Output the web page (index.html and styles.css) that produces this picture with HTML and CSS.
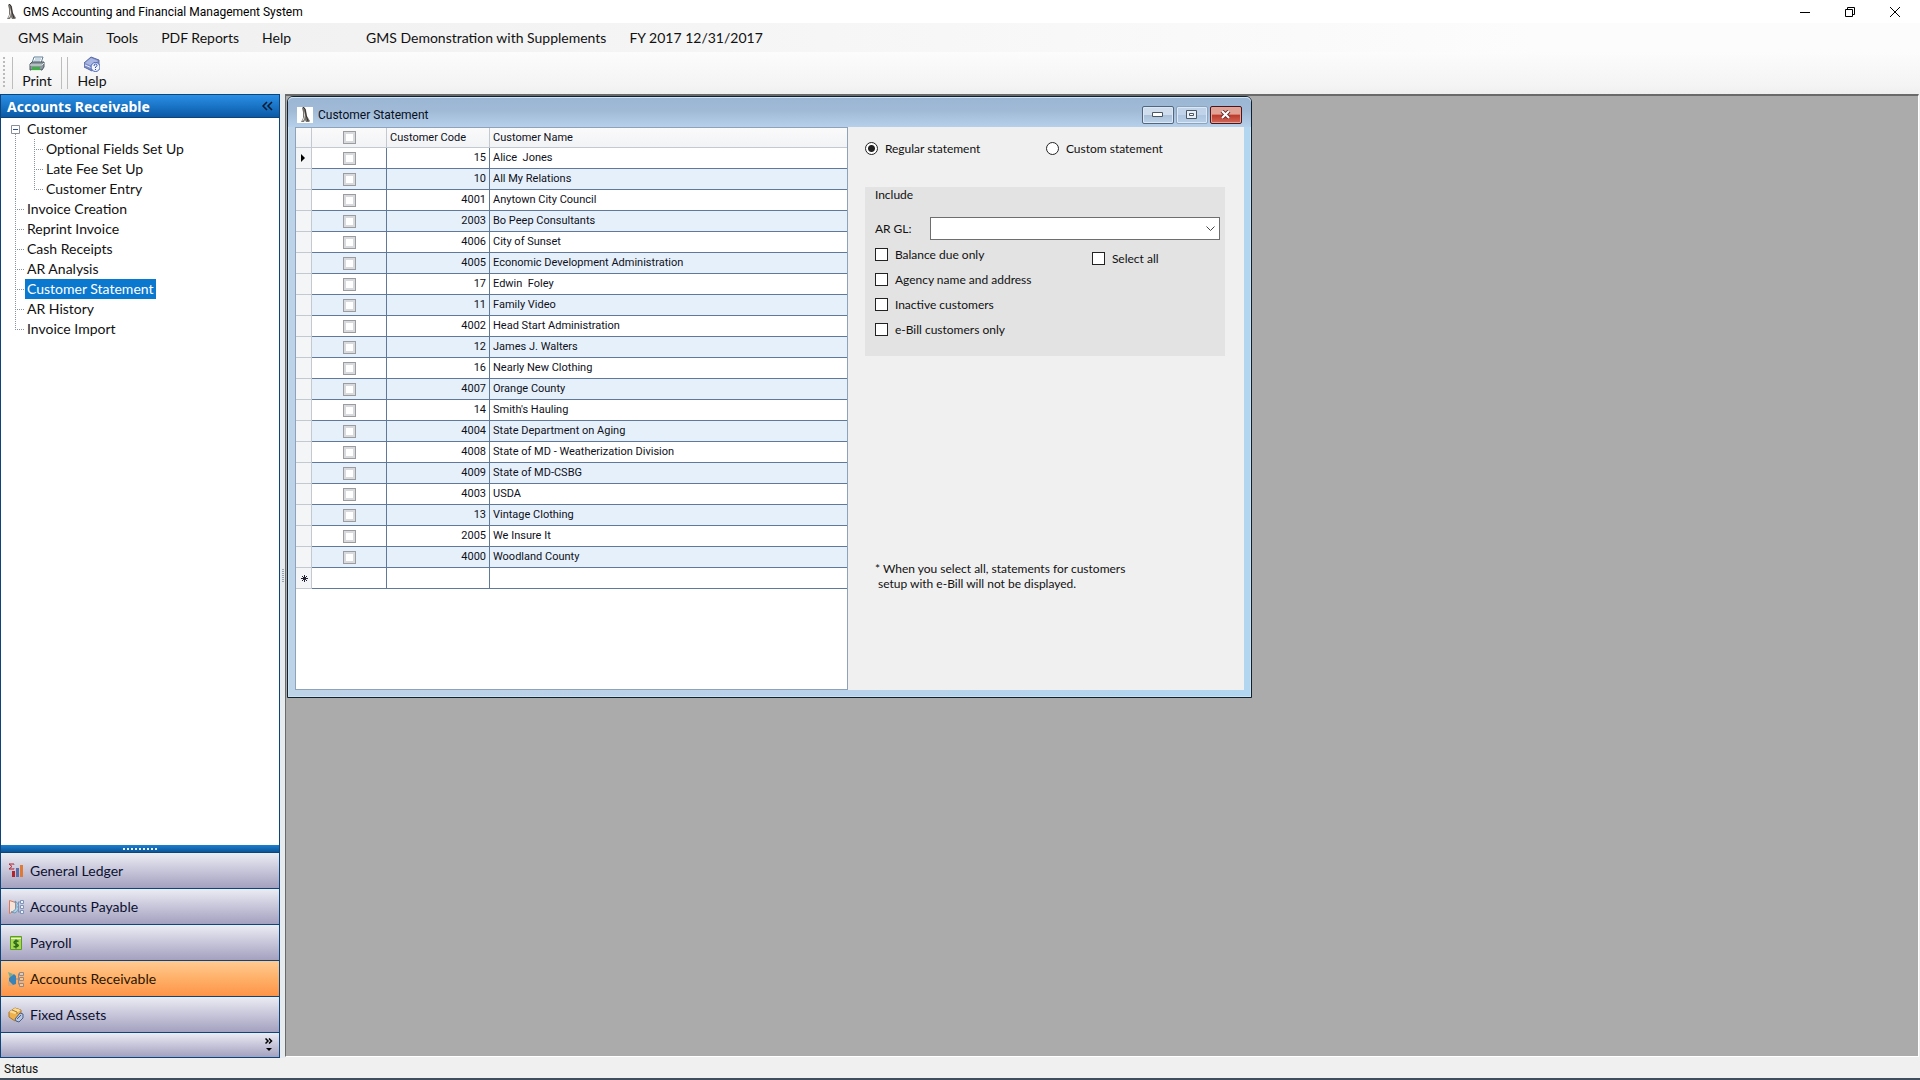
FILE: index.html
```html
<!DOCTYPE html>
<html lang="en">
<head>
    <meta charset="UTF-8">
    <meta name="viewport" content="width=device-width, initial-scale=1.0">
    <title>GMS Accounting and Financial Management System</title>
    <link rel="stylesheet" href="styles.css">
</head>
<body>

    <!-- Shared symbols -->
    <svg class="symbols" width="0" height="0" aria-hidden="true">
        <symbol id="logo" viewBox="0 0 16 16">
            <path d="M6 0c2 0 2 1 3 3l1 6 3 5-1 1H9L8 13l-1 2H4l2-4V5L5 1z" fill="#77736f"/>
            <path d="M7 4l1 4-1 5-2 1 2-4z" fill="#e4dfdb"/>
            <path d="M6 0l2 2 1 6 2 6" fill="none" stroke="#34312f"/>
        </symbol>
    </svg>

    <!-- Title bar -->
    <header class="titlebar">
        <svg class="logo" width="16" height="16"><use href="#logo"/></svg>
        <h1>GMS Accounting and Financial Management System</h1>
        <div class="window-buttons">
            <button type="button" aria-label="Minimize"><svg width="10" height="10"><path d="M0 5.5h10" stroke="#000"/></svg></button>
            <button type="button" aria-label="Restore"><svg width="10" height="10"><path d="M.5 2.5h7v7h-7zM2.500 2.500v-2h7v7h-2" fill="none" stroke="#000"/></svg></button>
            <button type="button" aria-label="Close"><svg width="10" height="10"><path d="M0 0l10 10M10 0L0 10" stroke="#000"/></svg></button>
        </div>
    </header>

    <!-- Menu -->
    <nav class="menubar">
        <button type="button">GMS Main</button>
        <button type="button">Tools</button>
        <button type="button">PDF Reports</button>
        <button type="button">Help</button>
        <span class="company">GMS Demonstration with Supplements</span>
        <span class="fiscal-year">FY 2017 12/31/2017</span>
    </nav>

    <!-- Toolbar -->
    <div class="toolbar">
        <span class="grip"></span>
        <span class="separator"></span>
        <button type="button">
            <svg width="16" height="16" viewBox="0 0 16 16">
                <path d="M5 1h9l-2 6H3z" fill="#fff" stroke="#5f7f96"/>
                <path d="M6 3h6M5 5h6" stroke="#8fb2c8"/>
                <path d="M1 8l2-2h12v5l-2 3H1z" fill="#8b979d" stroke="#4c5a60"/>
                <path d="M1 9h12l2-2" fill="none" stroke="#dfe8ea"/>
                <path d="M3 11h8v3H3z" fill="#3fae45"/>
                <path d="M2 14.500h10" stroke="#dff2dc"/>
            </svg>
            Print
        </button>
        <span class="separator"></span>
        <span class="separator"></span>
        <button type="button">
            <svg width="16" height="16" viewBox="0 0 16 16">
                <path d="M0 7l7-6 8 3v6l-7 5-8-4z" fill="#7f8fc6" stroke="#5a6aa6"/>
                <path d="M1 7l6-5 7 3-6 5z" fill="#a9b6e2"/>
                <path d="M1 9l7 3" stroke="#e9edfa"/>
                <circle cx="11.500" cy="11" r="4.500" fill="#f2f5ff" stroke="#4363b5"/>
                <path d="M10 10q0-2 1.500-2t1.500 1.500q0 1-1.500 1.500v1M11.500 13v1" fill="none" stroke="#2f4fa8"/>
            </svg>
            Help
        </button>
    </div>

    <main class="workspace">
        <!-- Navigation pane -->
        <aside class="sidebar">
            <div class="sidebar-header">
                <h2>Accounts Receivable</h2>
                <button type="button" aria-label="Collapse pane">
                    <svg width="11" height="10"><path d="M5 1L1 5l4 4M10 1L6 5l4 4" fill="none" stroke="#06182e" stroke-width="1.500"/></svg>
                </button>
            </div>

            <ul class="tree">
                <li>
                    <div class="node">
                        <button type="button" class="expander" aria-label="Collapse Customer"><svg width="9" height="9"><path d="M.5.5h8v8h-8z" fill="#fff" stroke="#8a8f96"/><path d="M2 4.500h5" stroke="#2b4f96"/></svg></button>
                        <a href="#">Customer</a>
                    </div>
                    <ul>
                        <li><a href="#">Optional Fields Set Up</a></li>
                        <li><a href="#">Late Fee Set Up</a></li>
                        <li><a href="#">Customer Entry</a></li>
                    </ul>
                </li>
                <li><a href="#">Invoice Creation</a></li>
                <li><a href="#">Reprint Invoice</a></li>
                <li><a href="#">Cash Receipts</a></li>
                <li><a href="#">AR Analysis</a></li>
                <li><a href="#" class="selected">Customer Statement</a></li>
                <li><a href="#">AR History</a></li>
                <li><a href="#">Invoice Import</a></li>
            </ul>

            <div class="sidebar-splitter"><span></span></div>

            <nav class="modules">
                <button type="button">
                    <svg width="16" height="16" viewBox="0 0 16 16">
                        <path d="M6 1.500V1H1l3 2.500L1 6h5v-.5" fill="none" stroke="#b3242c"/>
                        <path d="M4 8h3v6H4z" fill="#b3242c"/>
                        <path d="M8 5h3v9H8z" fill="#5c6ea8"/>
                        <path d="M12 2h3v12h-3z" fill="#df7a35"/>
                    </svg>
                    General Ledger
                </button>
                <button type="button">
                    <svg width="16" height="16" viewBox="0 0 16 16">
                        <path d="M1.500 1.500l6 2v8l-6 3z" fill="#f7e3d8" stroke="#d9785b"/>
                        <path d="M3 13c5-1 6-5 4-11 5 3 5 9 0 12z" fill="#a8d2ea" stroke="#6f97b5"/>
                        <path d="M9 8h2M10.500 3v10M10 3h2M10 13h2" fill="none" stroke="#7e93b8"/>
                        <path d="M12.500 1.500h3v3h-3zM12.500 6.500h3v3h-3zM12.500 11.500h3v3h-3z" fill="#eef3fb" stroke="#7e93b8"/>
                    </svg>
                    Accounts Payable
                </button>
                <button type="button">
                    <svg width="16" height="16" viewBox="0 0 16 16">
                        <path d="M2.500 1.500h11v13h-11z" fill="#a8d84f" stroke="#5f9a2e"/>
                        <path d="M3 3.500h10" stroke="#eaf7cf"/>
                        <path d="M10.500 6.500Q8 5 6.500 6.500T8 9t2 2-4.500.5M8 4.500v9" fill="none" stroke="#2d6b1c" stroke-width="1.500"/>
                    </svg>
                    Payroll
                </button>
                <button type="button" class="active">
                    <svg width="16" height="16" viewBox="0 0 16 16">
                        <path d="M0 1l5 2-3 4z" fill="#7cae8e"/>
                        <path d="M1 7l5-4 2 2v8l-3 1-4-4z" fill="#3a83b8"/>
                        <path d="M0 10l5 5H0z" fill="#d8a77c"/>
                        <path d="M8 8h3M10.500 3v10M10 3h2M10 13h2" fill="none" stroke="#8f8a90"/>
                        <path d="M11.500 1.500h4v3h-4zM11.500 6.500h4v3h-4zM11.500 12.500h4v3h-4z" fill="#f3c795" stroke="#8f8a90"/>
                    </svg>
                    Accounts Receivable
                </button>
                <button type="button">
                    <svg width="16" height="16" viewBox="0 0 16 16">
                        <path d="M1 5l6-4 6 2v7l-6 4-6-4z" fill="#eeb04a" stroke="#a8742a"/>
                        <path d="M1 5l6 2 6-4-6-2z" fill="#fbdc96"/>
                        <path d="M4 3l5 2v2" fill="none" stroke="#a8742a"/>
                        <path d="M7 12l5-6 3 1v4l-4 4-3-1z" fill="#b7c7e2" stroke="#4d5f86"/>
                        <path d="M9 12l4-4" stroke="#4d5f86"/>
                    </svg>
                    Fixed Assets
                </button>
            </nav>
            <div class="modules-overflow">
                <button type="button" aria-label="Configure buttons">
                    <svg width="8" height="14"><path d="M.5.5L3 3 .5 5.500M4 .5L6.500 3 4 5.500" fill="none" stroke="#000" stroke-width="1.500"/><path d="M1 10h6l-3 3z"/></svg>
                </button>
            </div>
        </aside>

        <div class="splitter"><span></span></div>

        <!-- Desktop for child windows -->
        <div class="desktop">
            <section class="child-window">
                <div class="child-title">
                    <svg class="child-logo" width="16" height="16"><use href="#logo"/></svg>
                    <h2>Customer Statement</h2>
                    <div class="child-buttons">
                        <button type="button" aria-label="Minimize"><svg width="11" height="5"><path d="M.5.5h10v4H.5z" fill="#fff" stroke="#4a5763"/></svg></button>
                        <button type="button" class="dim" aria-label="Maximize"><svg width="11" height="9"><path d="M.5.5h10v8H.5z" fill="#e8eff7" stroke="#4a5763"/><path d="M3.500 3.500h4v2h-4z" fill="#fff" stroke="#4a5763"/></svg></button>
                        <button type="button" class="close" aria-label="Close"><svg width="11" height="9" viewBox="0 0 11 9"><path d="M2 1l7 7M9 1L2 8" stroke="#6c3033" stroke-width="4"/><path d="M2 1l7 7M9 1L2 8" stroke="#fff" stroke-width="2"/></svg></button>
                    </div>
                </div>

                <div class="child-body">
                    <div class="grid-pane">
                        <table class="grid">
                            <thead>
                                <tr>
                                    <th class="row-head"></th>
                                    <th class="pick"><input type="checkbox" aria-label="Select every customer"></th>
                                    <th class="code">Customer Code</th>
                                    <th>Customer Name</th>
                                </tr>
                            </thead>
                            <tbody>
                                <tr><th><svg width="5" height="8"><path d="M0 0l4 4-4 4z"/></svg></th><td><input type="checkbox" aria-label="Alice Jones"></td><td>15</td><td>Alice&nbsp; Jones</td></tr>
                                <tr><th></th><td><input type="checkbox" aria-label="All My Relations"></td><td>10</td><td>All My Relations</td></tr>
                                <tr><th></th><td><input type="checkbox" aria-label="Anytown City Council"></td><td>4001</td><td>Anytown City Council</td></tr>
                                <tr><th></th><td><input type="checkbox" aria-label="Bo Peep Consultants"></td><td>2003</td><td>Bo Peep Consultants</td></tr>
                                <tr><th></th><td><input type="checkbox" aria-label="City of Sunset"></td><td>4006</td><td>City of Sunset</td></tr>
                                <tr><th></th><td><input type="checkbox" aria-label="Economic Development Administration"></td><td>4005</td><td>Economic Development Administration</td></tr>
                                <tr><th></th><td><input type="checkbox" aria-label="Edwin Foley"></td><td>17</td><td>Edwin&nbsp; Foley</td></tr>
                                <tr><th></th><td><input type="checkbox" aria-label="Family Video"></td><td>11</td><td>Family Video</td></tr>
                                <tr><th></th><td><input type="checkbox" aria-label="Head Start Administration"></td><td>4002</td><td>Head Start Administration</td></tr>
                                <tr><th></th><td><input type="checkbox" aria-label="James J. Walters"></td><td>12</td><td>James J. Walters</td></tr>
                                <tr><th></th><td><input type="checkbox" aria-label="Nearly New Clothing"></td><td>16</td><td>Nearly New Clothing</td></tr>
                                <tr><th></th><td><input type="checkbox" aria-label="Orange County"></td><td>4007</td><td>Orange County</td></tr>
                                <tr><th></th><td><input type="checkbox" aria-label="Smith's Hauling"></td><td>14</td><td>Smith's Hauling</td></tr>
                                <tr><th></th><td><input type="checkbox" aria-label="State Department on Aging"></td><td>4004</td><td>State Department on Aging</td></tr>
                                <tr><th></th><td><input type="checkbox" aria-label="State of MD - Weatherization Division"></td><td>4008</td><td>State of MD - Weatherization Division</td></tr>
                                <tr><th></th><td><input type="checkbox" aria-label="State of MD-CSBG"></td><td>4009</td><td>State of MD-CSBG</td></tr>
                                <tr><th></th><td><input type="checkbox" aria-label="USDA"></td><td>4003</td><td>USDA</td></tr>
                                <tr><th></th><td><input type="checkbox" aria-label="Vintage Clothing"></td><td>13</td><td>Vintage Clothing</td></tr>
                                <tr><th></th><td><input type="checkbox" aria-label="We Insure It"></td><td>2005</td><td>We Insure It</td></tr>
                                <tr><th></th><td><input type="checkbox" aria-label="Woodland County"></td><td>4000</td><td>Woodland County</td></tr>
                                <tr><th><svg width="7" height="7"><path d="M3.500 0v7M0 3.500h7M1 1l5 5M6 1L1 6" stroke="#223"/></svg></th><td></td><td></td><td></td></tr>
                            </tbody>
                        </table>
                    </div>

                    <form class="options">
                        <div class="statement-type">
                            <label><input type="radio" name="statement" value="regular" checked> Regular statement</label>
                            <label><input type="radio" name="statement" value="custom"> Custom statement</label>
                        </div>

                        <div class="include" role="group" aria-labelledby="includeTitle">
                            <h3 id="includeTitle">Include</h3>
                            <div class="gl-row">
                                <label for="arGl">AR GL:</label>
                                <select id="arGl" name="arGl">
                                    <option value=""></option>
                                </select>
                            </div>
                            <div class="checks">
                                <div class="check-list">
                                    <label><input type="checkbox" name="balanceDue"> Balance due only</label>
                                    <label><input type="checkbox" name="agency"> Agency name and address</label>
                                    <label><input type="checkbox" name="inactive"> Inactive customers</label>
                                    <label><input type="checkbox" name="ebill"> e-Bill customers only</label>
                                </div>
                                <label class="select-all"><input type="checkbox" name="selectAll"> Select all</label>
                            </div>
                        </div>

                        <p class="note">* When you select all, statements for customers<br>&nbsp;setup with e-Bill will not be displayed.</p>
                    </form>
                </div>
            </section>
        </div>
    </main>

    <footer class="statusbar">Status</footer>

</body>
</html>
```
FILE: styles.css
```css
* {
    box-sizing: border-box;
}
body {
    margin: 0;
    height: 100vh;
    display: flex;
    flex-direction: column;
    overflow: hidden;
    background: #f0f0f0;
    color: #111;
    font-family: Lato, "Noto Sans", sans-serif;
    font-size: 14px;
}
h1, h2, h3, p, ul {
    margin: 0;
    padding: 0;
}
button {
    margin: 0;
    padding: 0;
    border: none;
    background: none;
    color: inherit;
    font: inherit;
}
svg {
    display: block;
    flex: none;
}
input {
    margin: 0;
    flex: none;
}
.symbols {
    position: absolute;
}

/* Title bar */
.titlebar {
    display: flex;
    align-items: center;
    height: 23px;
    padding-left: 3px;
    background: #fff;
}
.titlebar h1 {
    margin-left: 4px;
    font: 12px Roboto, sans-serif;
    color: #000;
}
.window-buttons {
    display: flex;
    margin-left: auto;
    margin-right: 3px;
    height: 20px;
}
.window-buttons button {
    display: grid;
    place-items: center;
    width: 45px;
}

/* Menu and toolbar */
.menubar {
    display: flex;
    align-items: center;
    height: 29px;
    padding-left: 18px;
    gap: 23px;
    background: linear-gradient(to right, #efefef, #fcfcfc 80%);
}
.company {
    margin-left: 52px;
}
.toolbar {
    display: flex;
    align-items: center;
    height: 42px;
    padding: 0 3px;
    background: linear-gradient(#fcfcfc, #f4f4f4 80%, #efefef);
}
.toolbar button {
    display: flex;
    flex-direction: column;
    align-items: center;
    width: 48px;
    line-height: 18px;
}
.grip {
    width: 2px;
    height: 32px;
    margin-right: 7px;
    background: repeating-linear-gradient(#bbb 0 2px, transparent 2px 4px);
}
.separator {
    width: 1px;
    height: 32px;
    background: #bdbdbd;
}
.separator + .separator {
    margin-left: 5px;
}

/* Navigation pane */
.workspace {
    flex: 1;
    display: flex;
    min-height: 0;
}
.sidebar {
    flex: 0 0 280px;
    display: flex;
    flex-direction: column;
    border: 1px solid #0d4479;
    border-bottom: none;
    background: #fff;
}
.sidebar-header {
    display: flex;
    align-items: center;
    justify-content: space-between;
    height: 23px;
    padding: 0 6px;
    background: linear-gradient(#2a8fe6, #0a5aa6);
    border-bottom: 1px solid #0d4479;
}
.sidebar-header h2 {
    color: #fff;
    font: bold 14px "Noto Sans", sans-serif;
}
.tree {
    flex: 1;
    padding: 1px 0 0 10px;
    list-style: none;
}
.tree ul {
    padding-left: 19px;
    list-style: none;
}
.tree li {
    background: repeating-linear-gradient(#8494a8 0 1px, transparent 1px 2px) 4px 0 / 1px 100% no-repeat;
}
.tree > li:first-child {
    background-position: 4px 15px;
}
.tree li:last-child {
    background-size: 1px 10px;
}
.tree a {
    display: inline-block;
    height: 20px;
    padding: 0 2px;
    color: #111;
    line-height: 20px;
    text-decoration: none;
    vertical-align: top;
}
.tree li:not(:first-child)::before, .tree ul li::before {
    content: "";
    display: inline-block;
    width: 9px;
    height: 1px;
    margin: 10px 1px 0 4px;
    vertical-align: top;
    background: repeating-linear-gradient(to right, #8494a8 0 1px, transparent 1px 2px);
}
.node {
    display: flex;
    align-items: center;
    height: 20px;
}
.node a {
    margin-left: 5px;
}
.tree .selected {
    background: #0b78d0;
    color: #fff;
}
.sidebar-splitter {
    display: grid;
    place-items: center;
    height: 8px;
    background: linear-gradient(#1c7fd0, #0b5596);
    border-bottom: 1px solid #0d4479;
}
.sidebar-splitter span {
    width: 35px;
    height: 2px;
    background: repeating-linear-gradient(to right, #e6f1fb 0 2px, transparent 2px 4px);
}
.modules button {
    display: flex;
    align-items: center;
    gap: 6px;
    width: 100%;
    height: 36px;
    padding-left: 7px;
    background: linear-gradient(#ececf4, #c7c6da 50%, #a3a1bf);
    border-bottom: 1px solid #0d4479;
    color: #0c1030;
}
.modules .active {
    background: linear-gradient(#ffcb92, #ffb068 50%, #fd9448);
    color: #2a1500;
}
.modules-overflow {
    display: flex;
    justify-content: flex-end;
    align-items: center;
    height: 25px;
    padding-right: 6px;
    background: linear-gradient(#ececf4, #c7c6da 50%, #a3a1bf);
    border-bottom: 1px solid #0d4479;
}
.splitter {
    flex: 0 0 5px;
    display: grid;
    place-items: center;
    background: #e6ebf0;
}
.splitter span {
    width: 2px;
    height: 14px;
    background: repeating-linear-gradient(#9aa3ab 0 1px, transparent 1px 2px);
}

/* Desktop and child window */
.desktop {
    flex: 1;
    min-width: 0;
    margin: 0 1px 1px 0;
    background: #ababab;
    border: 1px solid #6a6a6a;
    border-top-width: 2px;
    border-right-color: #fff;
    border-bottom-color: #fff;
}
.child-window {
    width: calc(59% + 2px);
    min-width: 760px;
    margin-left: 1px;
    padding: 0 7px 7px;
    border: 1px solid #10202c;
    border-radius: 6px 6px 0 0;
    background: linear-gradient(to right, #bcd3e8, #b9d1ea 50%, #b2d6f0);
    box-shadow: inset 0 0 0 1px #c8e2f4;
}
.child-title {
    display: flex;
    align-items: center;
    height: 30px;
    margin: 0 -7px;
    padding: 5px 9px 0 9px;
    border-radius: 5px 5px 0 0;
    background: linear-gradient(#9ab6d4, #a0bad6 45%, #b6cfea);
    box-shadow: inset 0 1px 0 #d3e4f2;
}
.child-logo {
    background: #fff;
}
.child-title h2 {
    margin-left: 5px;
    font: 12px Roboto, sans-serif;
    color: #06101e;
}
.child-buttons {
    display: flex;
    gap: 2px;
    margin-left: auto;
}
.child-buttons button {
    display: grid;
    place-items: center;
    width: 32px;
    height: 18px;
    border: 1px solid #51677f;
    border-radius: 2px;
    background: linear-gradient(#cfddec 50%, #a9c0d8 50%, #bdd2e8);
    box-shadow: inset 0 0 0 1px #dce8f4;
}
.child-buttons .dim {
    border-color: #8ba4c0;
    background: linear-gradient(#c0d3e8 50%, #adc5df 50%, #b9cfe8);
}
.child-buttons .close {
    border-color: #4d1519;
    background: linear-gradient(#e2a397 45%, #bd3a2b 50%, #d0685a);
    box-shadow: inset 0 0 0 1px #e0a59b;
}
.child-body {
    display: flex;
    background: #f0f0f0;
}

/* Customer grid */
.grid-pane {
    flex: 1;
    min-width: 0;
    padding-bottom: 100px;
    background: #fff;
    border: 1px solid #8ea3ba;
}
.grid {
    width: 100%;
    table-layout: fixed;
    border-collapse: separate;
    border-spacing: 0;
    color: #0e1020;
    font: 11px Roboto, sans-serif;
}
.grid th, .grid td {
    height: 21px;
    padding: 0 3px;
    font-weight: normal;
    text-align: left;
    line-height: 18px;
    white-space: nowrap;
}
.grid thead th {
    height: 20px;
    background: linear-gradient(#fafafb, #f2f3f5);
    border-right: 1px solid #c3c9d0;
    border-bottom: 1px solid #c3c9d0;
}
.grid .row-head {
    width: 16px;
}
.grid .pick {
    width: 75px;
    text-align: center;
}
.grid .code {
    width: 103px;
}
.grid tbody th {
    padding: 0 5px;
    background: #f4f5f7;
    border-right: 1px solid #c3c9d0;
    border-bottom: 1px solid #c3c9d0;
}
.grid td {
    border-right: 1px solid #60799a;
    border-bottom: 1px solid #60799a;
}
.grid tr > :last-child {
    border-right: none;
}
.grid td:nth-child(2) {
    text-align: center;
}
.grid td:nth-child(3) {
    text-align: right;
}
.grid tbody tr:nth-child(even) td {
    background: #e6f0fb;
}
.grid input {
    appearance: none;
    display: block;
    width: 13px;
    height: 13px;
    margin: 0 auto;
    border: 1px solid #9a9ca0;
    background: #fff;
    box-shadow: inset 0 0 0 2px #d9dade;
}
.grid input:checked {
    background: #4a6a98;
}

/* Options panel */
.options {
    flex: 0 0 396px;
    padding: 13px 19px 0 17px;
    font-size: 12px;
}
.statement-type {
    display: grid;
    grid-template-columns: 181px 1fr;
}
.options label {
    display: flex;
    align-items: center;
    gap: 7px;
    line-height: 17px;
}
.options input {
    appearance: none;
    width: 13px;
    height: 13px;
    border: 1px solid #222;
    background: #fff;
}
.options input[type="radio"] {
    border-radius: 50%;
}
.options input[type="radio"]:checked {
    background: radial-gradient(#222 0 3px, #fff 4px);
}
.options input[type="checkbox"]:checked {
    box-shadow: inset 0 0 0 3px #fff;
    background: #222;
}
.include {
    margin-top: 30px;
    padding: 0 5px 18px 10px;
    background: #e3e3e3;
}
.include h3 {
    font-size: 12px;
    font-weight: normal;
    line-height: 16px;
}
.gl-row {
    display: flex;
    align-items: center;
    margin-top: 14px;
}
.gl-row label {
    flex: 0 0 55px;
}
.gl-row select {
    appearance: none;
    flex: 1;
    height: 23px;
    border: 1px solid #6e6e6e;
    border-radius: 0;
    background: #fff url("data:image/svg+xml,%3Csvg xmlns='http://www.w3.org/2000/svg' width='9' height='6'%3E%3Cpath d='M.5.5l4 4 4-4' fill='none' stroke='%23444'/%3E%3C/svg%3E") right 4px center no-repeat;
    font: inherit;
}
.checks {
    display: grid;
    grid-template-columns: 217px 1fr;
    align-items: start;
    margin-top: 6px;
}
.check-list {
    display: grid;
    gap: 8px;
}
.select-all {
    margin-top: 4px;
}
.note {
    margin: 205px 0 0 10px;
    line-height: 15px;
}

.statusbar {
    height: 22px;
    padding-left: 4px;
    border-bottom: 2px solid #3f4d5c;
    background: #f0f0f0;
    font: 12px/22px Roboto, sans-serif;
}
```
